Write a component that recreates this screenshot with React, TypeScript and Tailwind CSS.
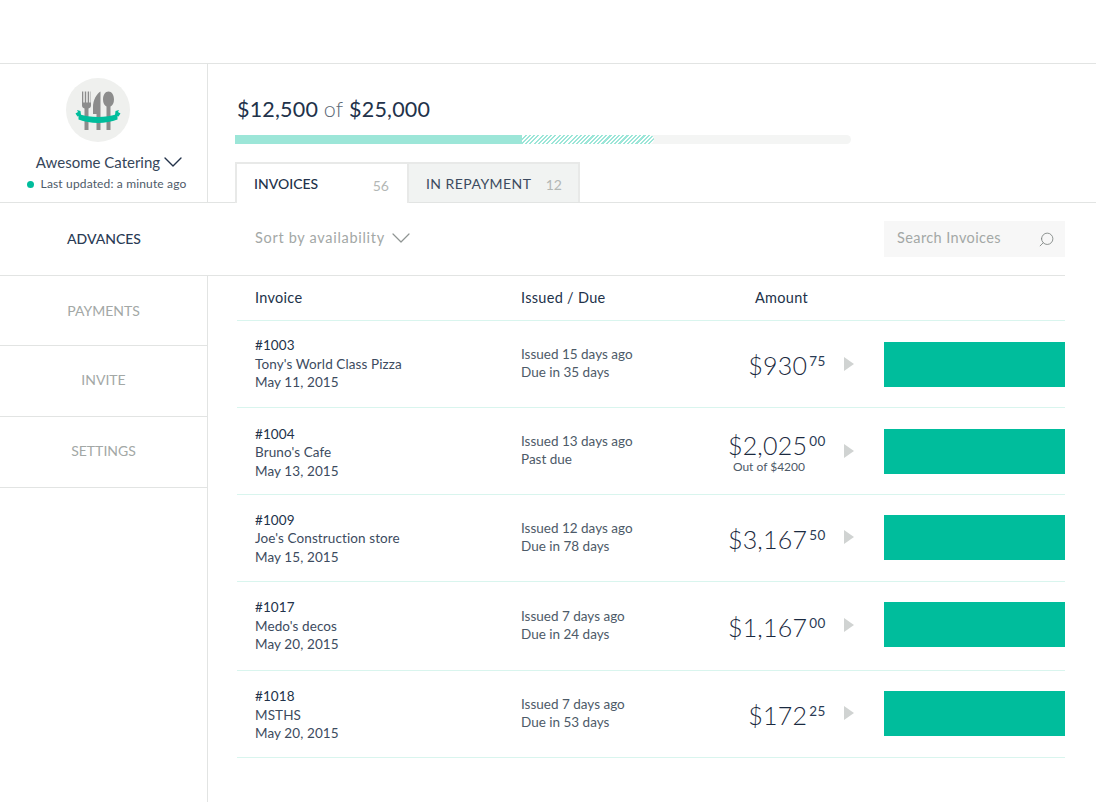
import { ChevronDown, Search } from 'lucide-react'

const invoices = [
    { id: '#1003', name: "Tony's World Class Pizza", date: 'May 11, 2015', issued: 'Issued 15 days ago', due: 'Due in 35 days', whole: '$930', cents: '75', h: 'h-[87px]', bar: '', text: '' },
    { id: '#1004', name: "Bruno's Cafe", date: 'May 13, 2015', issued: 'Issued 13 days ago', due: 'Past due', whole: '$2,025', cents: '00', note: 'Out of $4200', h: 'h-[87px]', bar: '', text: 'pt-[3px]' },
    { id: '#1009', name: "Joe's Construction store", date: 'May 15, 2015', issued: 'Issued 12 days ago', due: 'Due in 78 days', whole: '$3,167', cents: '50', h: 'h-[87px]', bar: '-mt-[2px]', text: 'pt-[1px]' },
    { id: '#1017', name: "Medo's decos", date: 'May 20, 2015', issued: 'Issued 7 days ago', due: 'Due in 24 days', whole: '$1,167', cents: '00', h: 'h-[89px]', bar: '-mt-[3px]', text: '' },
    { id: '#1018', name: 'MSTHS', date: 'May 20, 2015', issued: 'Issued 7 days ago', due: 'Due in 53 days', whole: '$172', cents: '25', h: 'h-[87px]', bar: '-mt-[2px]', text: 'pt-[2px]' },
]

function Logo() {
    return (
        <svg width="64" height="64" viewBox="0 0 64 64" className="mr-[11px] shrink-0">
            <circle cx="32" cy="32" r="32" fill="#eff0ee" />
            {/* fork */}
            <path d="M16 13.500h1.300v11h1.500v-11h1.400v11h1.500v-11h1.400v11h1.500v-11H25v14c0 1.500-1 2.500-2.500 3V52h-4V30.500c-1.500-.5-2.500-1.500-2.500-3z" fill="#8c8c8c" />
            {/* knife */}
            <path d="M34.500 13.500V52h-4V36h-3.500v-7c0-7 3.500-13 7.500-15.500z" fill="#8c8c8c" />
            {/* spoon */}
            <path d="M42.500 13.500c3.200 0 5.500 3.500 5.500 8 0 3.500-1.500 6-3.500 7V52h-4V28.500c-2-1-3.500-3.500-3.500-7 0-4.500 2.300-8 5.500-8z" fill="#8c8c8c" />
            {/* ribbon */}
            <path d="M12.500 36c11.500 4 27.500 4 39 0v5.500c-11.500 4.500-27.500 4.500-39 0z" fill="#00bd9c" />
            <path d="M9.500 35.500l2.500-1.500-1-2 3.500 1 .5 4-3.500 1.500zM54.500 35.500l-2.500-1.500 1-2-3.500 1-.5 4 3.500 1.500z" fill="#00bd9c" />
        </svg>
    )
}

function NavItem({ label, h, active }: { label: string; h: string; active?: boolean }) {
    return (
        <div className={`${h} flex items-center justify-center border-b border-[#e2e4e3] text-[14px] ${active ? 'font-medium text-[#2a3b55]' : 'border-r text-[#a3a8a6]'}`}>
            {label}
        </div>
    )
}

export default function App() {
    return (
        <div className="h-[802px] w-[1096px] overflow-hidden bg-white font-['Lato',sans-serif] text-[#22324a]">
            {/* Top blank bar */}
            <div className="h-[64px] border-b border-[#e2e4e3]" />

            <div className="flex h-[738px]">
                {/* Sidebar */}
                <aside className="flex w-[208px] shrink-0 flex-col">
                    <div className="flex h-[139px] flex-col items-center border-r border-b border-[#e2e4e3] pt-[14px]">
                        <Logo />
                        <div className="mt-[9px] flex h-[21px] items-center pl-[18px] text-[15px] leading-5 text-[#36465a]">
                            Awesome Catering
                            <ChevronDown className="-ml-[3px] h-[32px] w-[32px] text-[#22324a]" strokeWidth={1} />
                        </div>
                        <div className="mt-[2px] flex items-center gap-[7px] pl-[6px] text-[12px] leading-5 tracking-[0.15px] text-[#4d5a68]">
                            <span className="h-[7px] w-[7px] rounded-full bg-[#00bd9c]" />
                            Last updated: a minute ago
                        </div>
                    </div>
                    <NavItem label="ADVANCES" h="h-[73px] pb-[2px]" active />
                    <NavItem label="PAYMENTS" h="h-[70px] pb-[1px]" />
                    <NavItem label="INVITE" h="h-[71px] pb-[3px]" />
                    <NavItem label="SETTINGS" h="h-[71px] pb-[3px]" />
                    <div className="flex-1 border-r border-[#e2e4e3]" />
                </aside>

                {/* Main */}
                <main className="flex-1">
                    {/* Progress + tabs */}
                    <div className="h-[139px] border-b border-[#e2e4e3] pl-[27px]">
                        <div className="pl-[2px] pt-[31px] text-[21.500px] leading-[29px] tracking-[0.2px]">
                            $12,500 <span className="font-light text-[#5d6a76]">of</span> $25,000
                        </div>
                        <div className="mt-[11px] flex h-[9px] w-[616px] overflow-hidden rounded-r-full bg-[#f4f5f4]">
                            <div className="w-[287px] bg-[#9ce6d8]" />
                            <div className="w-[132px] rounded-r-full bg-[repeating-linear-gradient(-45deg,#9ce6d8_0px,#9ce6d8_1.500px,#ffffff_1.500px,#ffffff_3px)]" />
                        </div>
                        <div className="mt-[18px] flex h-[41px]">
                            <div className="z-10 flex h-[41px] w-[174px] items-center border-2 border-b-0 border-[#e8e9e8] bg-white pl-[17px] pr-[18px]">
                                <span className="flex-1 text-[14px] font-medium">INVOICES</span>
                                <span className="mt-[3px] text-[14px] text-[#b3b7b5]">56</span>
                            </div>
                            <div className="flex h-[40px] w-[171px] items-center border-2 border-b-0 border-l-0 border-[#e8e9e8] bg-[#f1f3f2] pl-[17px] pr-[16px]">
                                <span className="flex-1 text-[14px] tracking-[0.45px] text-[#3c4b60]">IN REPAYMENT</span>
                                <span className="mt-[3px] text-[14px] text-[#b3b7b5]">12</span>
                            </div>
                        </div>
                    </div>

                    <div className="w-[857px]">
                        {/* Sort + search */}
                        <div className="flex h-[73px] items-center justify-between border-b border-[#e2e4e3] pl-[47px]">
                            <div className="flex h-[24px] items-center pb-[2px] text-[14.500px] tracking-[0.7px] text-[#a3a8a6]">
                                Sort by availability
                                <ChevronDown className="h-[32px] w-[32px] text-[#8f9593]" strokeWidth={0.9} />
                            </div>
                            <div className="flex h-[36px] w-[181px] items-center justify-between bg-[#f7f7f7] pl-[13px] pr-[10px] text-[14.500px] tracking-[0.4px] text-[#a3a8a6]">
                                <span className="pb-[2px]">Search Invoices</span>
                                <Search className="h-[17px] w-[17px] -scale-x-100 text-[#7d8381]" strokeWidth={1.2} />
                            </div>
                        </div>

                        {/* Table */}
                        <div className="pl-[29px]">
                            <div className="grid h-[45px] grid-cols-[266px_234px_1fr] items-center border-b border-[#d9f5ee] pl-[18px] text-[14.500px] tracking-[0.3px]">
                                <span>Invoice</span>
                                <span>Issued / Due</span>
                                <span>Amount</span>
                            </div>
                            {invoices.map(inv => (
                                <div key={inv.id} className={`${inv.h} flex items-center border-b border-[#d9f5ee] pl-[18px]`}>
                                    <div className={`${inv.text} w-[266px] text-[13.500px] leading-[18.500px] tracking-[0.1px] text-[#3c4b60]`}>
                                        <div className="text-[#22324a]">{inv.id}</div>
                                        <div>{inv.name}</div>
                                        <div>{inv.date}</div>
                                    </div>
                                    <div className="w-[160px] pb-[2px] text-[13.500px] leading-[18px] text-[#4d5a68]">
                                        <div>{inv.issued}</div>
                                        <div>{inv.due}</div>
                                    </div>
                                    <div className="mt-[2px] flex w-[145px] flex-col items-end">
                                        <div className="flex items-start">
                                            <span className="text-[25px] font-light leading-[30px] tracking-[0.2px] text-[#1b2a40]">{inv.whole}</span>
                                            <span className="ml-[2px] mt-[2px] text-[13.500px] leading-[18px] tracking-[0.6px] text-[#2a3b55]">{inv.cents}</span>
                                        </div>
                                        {inv.note && <div className="mr-[21px] text-[12px] leading-[14px] text-[#4d5a68]">{inv.note}</div>}
                                    </div>
                                    <div className={`${inv.bar} ml-[18px] h-0 w-0 border-y-[7px] border-l-[10px] border-y-transparent border-l-[#d0d3d2]`} />
                                    <div className={`${inv.bar} ml-[30px] h-[45px] w-[181px] bg-[#00bd9c]`} />
                                </div>
                            ))}
                        </div>
                    </div>
                </main>
            </div>
        </div>
    )
}
